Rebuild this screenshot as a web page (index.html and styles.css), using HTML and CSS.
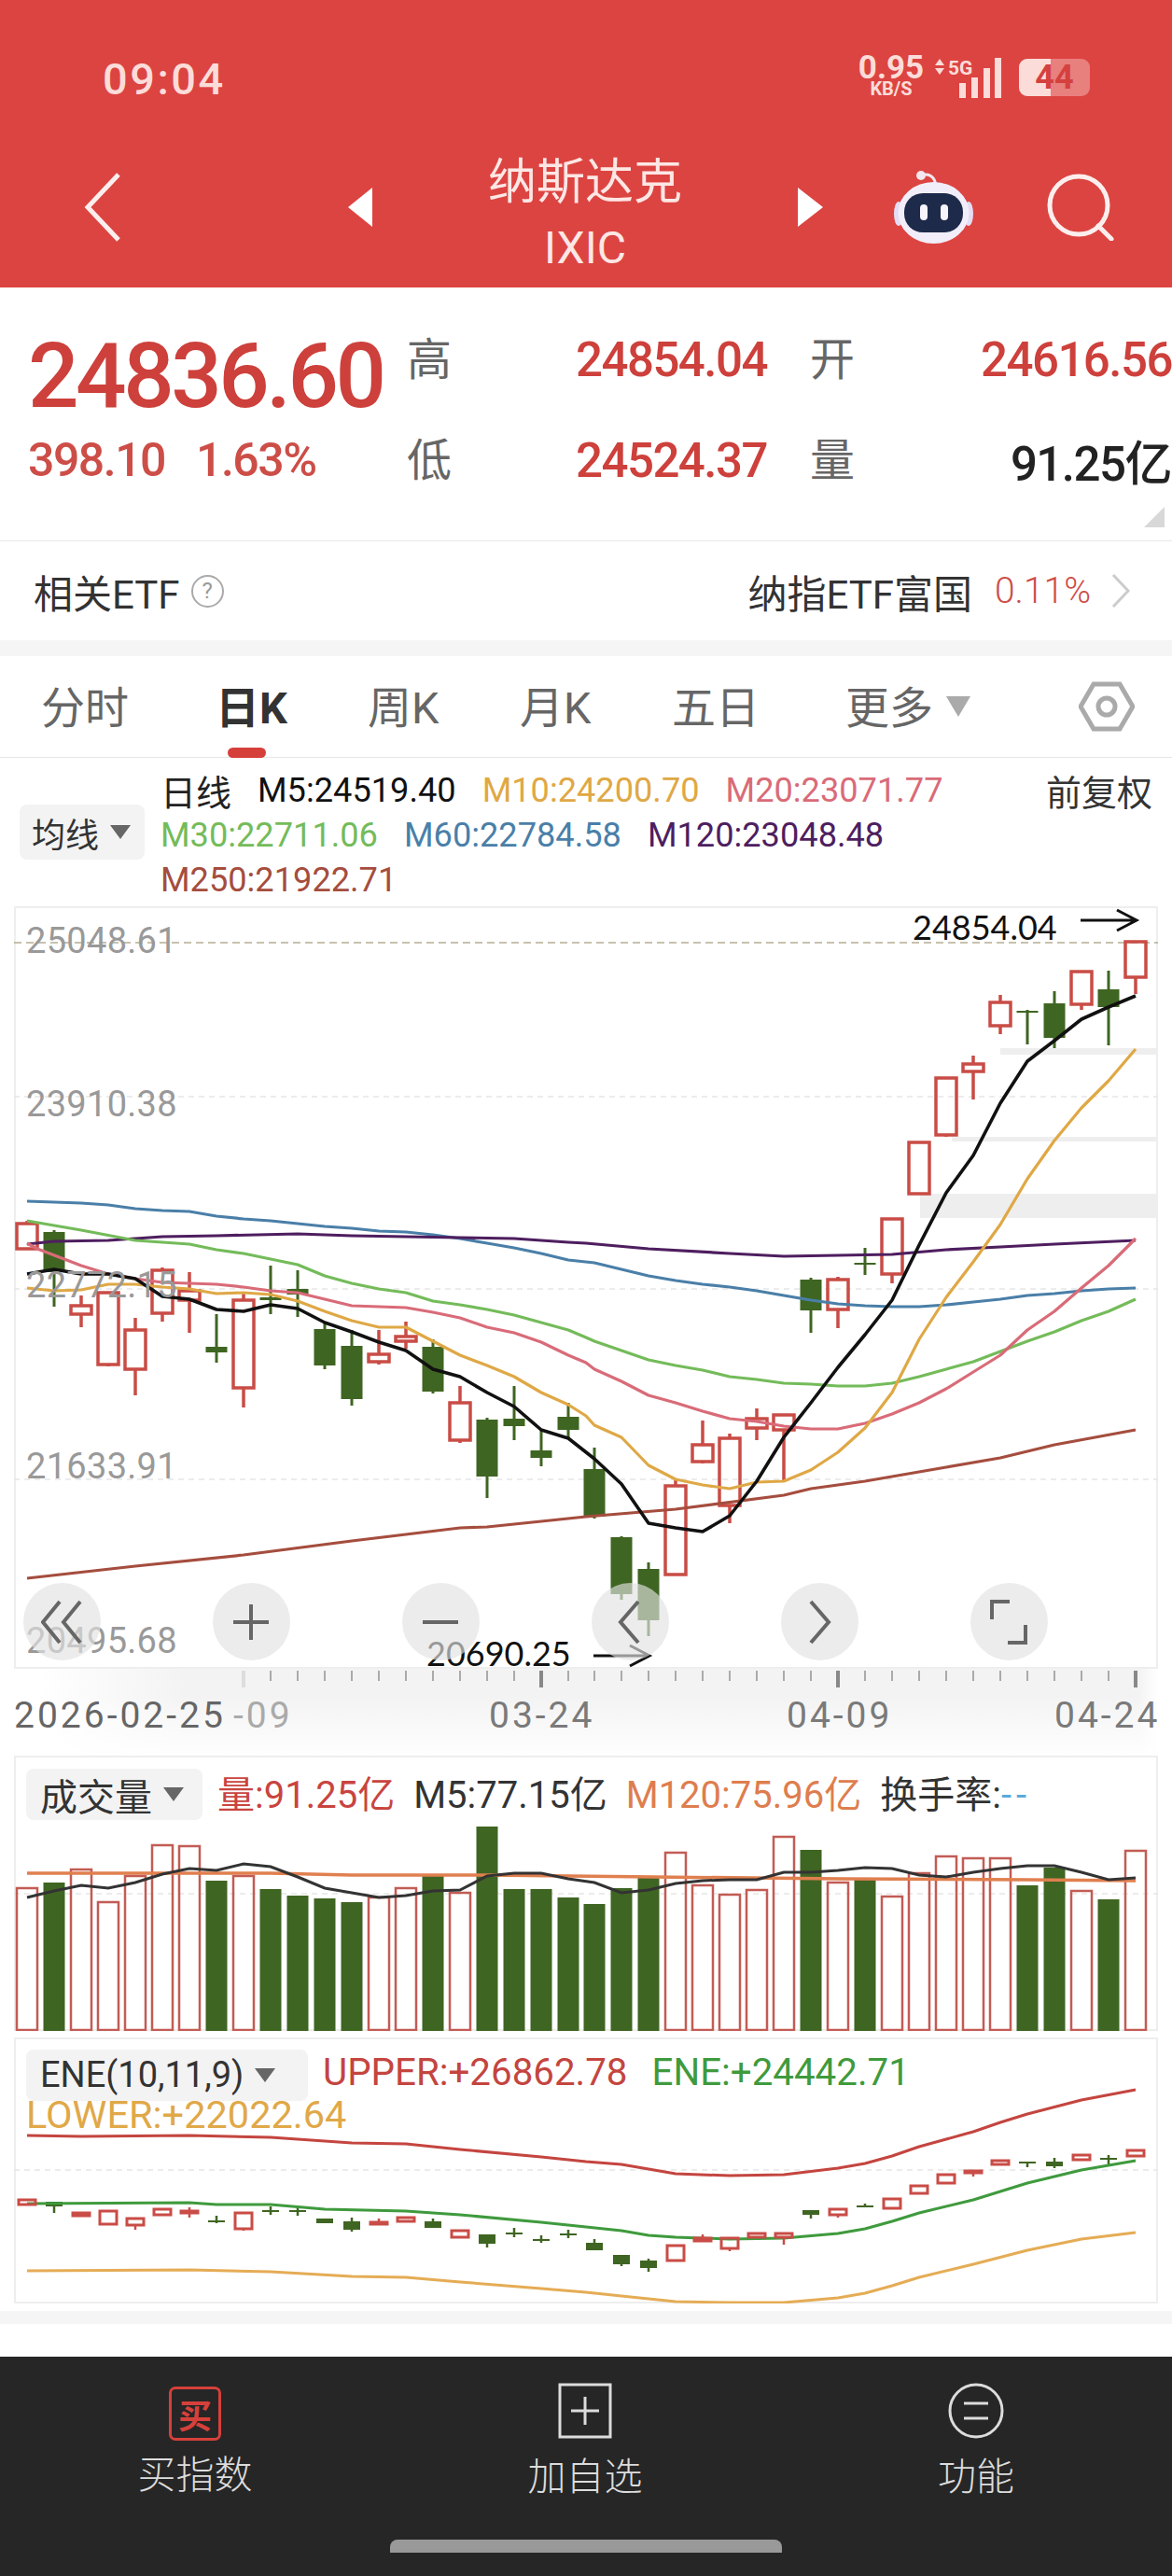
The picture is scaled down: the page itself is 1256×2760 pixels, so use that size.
FILE: index.html
```html
<!DOCTYPE html>
<html lang="zh">
<head>
<meta charset="utf-8">
<title>纳斯达克 IXIC</title>
<link rel="stylesheet" href="styles.css">
</head>
<body>
<div class="page">
<header class="hero">
  <div class="status">
    <span class="time">09:04</span>
    <div class="status-right">
      <div class="speed"><b>0.95</b><small>KB/S</small></div>
      <svg class="signal" viewBox="0 0 72 44" width="72" height="44"><path class="sig-fill" d="M1 9l5-7 5 7zM1 12l5 7 5-7z"/><text class="sig-text" x="15" y="19">5G</text><path class="sig-fill" d="M27 28h7v16h-7zM40 22h7v22h-7zM53 12h7v32h-7zM65 1h7v43h-7z"/></svg>
      <div class="battery"><span class="batt-fill"></span><span class="batt-text">44</span></div>
    </div>
  </div>
  <nav class="nav">
    <svg class="back" viewBox="0 0 40 74" width="40" height="74"><path d="M37 2L4 37l33 35" /></svg>
    <svg class="tri-l" viewBox="0 0 26 42" width="26" height="42"><path d="M26 0v42L0 21z"/></svg>
    <div class="title"><div class="t-cn">纳斯达克</div><div class="t-en">IXIC</div></div>
    <svg class="tri-r" viewBox="0 0 27 42" width="27" height="42"><path d="M0 0v42l27-21z"/></svg>
    <svg class="robot" viewBox="0 0 85 78" width="85" height="78"><path class="rb-ant" d="M30 5c8-3 14 2 15 11"/><circle class="rb-ball" cx="29" cy="5" r="5"/><ellipse class="rb-ear" cx="5" cy="46" rx="5" ry="13"/><ellipse class="rb-ear" cx="80" cy="46" rx="5" ry="13"/><ellipse class="rb-head" cx="42.500" cy="45" rx="38" ry="33"/><rect class="rb-face" x="11" y="24" width="63" height="42" rx="20"/><rect class="rb-eye" x="28" y="36" width="8" height="17" rx="4"/><rect class="rb-eye" x="50" y="36" width="8" height="17" rx="4"/></svg>
    <svg class="search" viewBox="0 0 72 72" width="72" height="72"><circle cx="34" cy="34" r="31"/><path d="M55 56l14 14"/></svg>
  </nav>
</header>

<section class="stats">
  <div class="quote">
    <div class="big">24836.60</div>
  </div>
  <div class="pair"><span class="k">高</span><span class="v red">24854.04</span></div>
  <div class="pair pair-last"><span class="k">开</span><span class="v red">24616.56</span></div>
  <div class="sub"><span>398.10</span><span>1.63%</span></div>
  <div class="pair"><span class="k">低</span><span class="v red">24524.37</span></div>
  <div class="pair pair-last"><span class="k">量</span><span class="v dark">91.25亿</span></div>
  <span class="corner"></span>
</section>

<section class="etf">
  <div class="etf-left">相关ETF<span class="help">?</span></div>
  <div class="etf-right"><span>纳指ETF富国</span><span class="etf-pct">0.11%</span>
    <svg class="etf-chev" viewBox="0 0 22 38" width="22" height="38"><path d="M3 2l16 17L3 36"/></svg></div>
</section>
<div class="band"></div>

<section class="tabs">
  <span class="tab">分时</span>
  <span class="tab active">日K</span>
  <span class="tab">周K</span>
  <span class="tab">月K</span>
  <span class="tab">五日</span>
  <span class="tab more">更多<svg viewBox="0 0 26 22" width="26" height="22"><path d="M0 0h26L13 22z"/></svg></span>
  <svg class="hex" viewBox="0 0 60 54" width="60" height="54"><path d="M16 3h28l14 24-14 24H16L2 27z"/><circle cx="30" cy="27" r="9"/></svg>
</section>

<section class="legend">
  <div class="drop drop-ma">均线<i class="caret"></i></div>
  <div class="legend-rows">
    <div class="lrow"><span class="c-day">日线</span><span class="c-k">M5:24519.40</span><span class="c-m10">M10:24200.70</span><span class="c-m20">M20:23071.77</span></div>
    <div class="lrow"><span class="c-m30">M30:22711.06</span><span class="c-m60">M60:22784.58</span><span class="c-m120">M120:23048.48</span></div>
    <div class="lrow"><span class="c-m250">M250:21922.71</span></div>
  </div>
  <span class="adj">前复权</span>
</section>

<section class="chart">
<svg class="plot" viewBox="15 971 1226 817" width="1226" height="817">
  <path class="zone" d="M1072 1123h169v7h-169zM1020 1218h221v5h-221zM986 1279h255v26h-255z"/>
  <path class="grid" d="M15 1175H1241M15 1381H1241M15 1585H1241"/>
  <path class="grid-top" d="M15 1010H1241"/>
  <text class="axis" x="28" y="1021">25048.61</text>
  <text class="axis" x="28" y="1196">23910.38</text>
  <path class="up-wick" d="M29 1308V1311M87 1388V1399M87 1408V1422M116 1462V1464M145 1412V1425M145 1467V1495M174 1358V1361M174 1407V1416M203 1363V1383M203 1393V1428M261 1385V1393M261 1487V1508M406 1425V1451M406 1459V1462M435 1416V1432M435 1437V1445M493 1485V1503M493 1543V1546M724 1585V1592M753 1522V1548M753 1566V1568M782 1536V1541M782 1613V1632M811 1509V1520M811 1530V1543M840 1532V1587M898 1368V1371M898 1403V1423M956 1365V1375M1014 1216V1218M1043 1131V1140M1043 1148V1178M1072 1066V1074M1072 1099V1108M1159 1076V1082M1217 1047V1065"/>
  <path class="up-body" d="M18 1311h22v27h-22zM76 1399h22v9h-22zM105 1385h22v77h-22zM134 1425h22v42h-22zM163 1361h22v46h-22zM192 1383h22v10h-22zM250 1393h22v94h-22zM395 1451h22v8h-22zM424 1432h22v5h-22zM482 1503h22v40h-22zM713 1592h22v95h-22zM742 1548h22v18h-22zM771 1541h22v72h-22zM800 1520h22v10h-22zM829 1516h22v16h-22zM887 1371h22v32h-22zM945 1306h22v59h-22zM974 1224h22v55h-22zM1003 1155h22v61h-22zM1032 1140h22v8h-22zM1061 1074h22v25h-22zM1148 1041h22v35h-22zM1206 1009h22v38h-22z"/>
  <path class="dn-wick" d="M58 1318V1400M232 1408V1460M290 1356V1408M319 1361V1411M348 1418V1467M377 1425V1506M464 1435V1493M522 1519V1605M551 1485V1543M580 1533V1571M609 1503V1540M637 1551V1627M666 1646V1714M695 1674V1753M869 1369V1428M927 1337V1366M1101 1082V1119M1130 1062V1123M1188 1040V1120"/>
  <path class="dn-body" d="M46.500 1320h23v43h-23zM220.500 1443h23v6h-23zM278.500 1390h23v3h-23zM307.500 1381h23v6h-23zM336.500 1424h23v39h-23zM365.500 1442h23v57h-23zM452.500 1443h23v48h-23zM510.500 1521h23v61h-23zM539.500 1520h23v8h-23zM568.500 1554h23v8h-23zM597.500 1518h23v14h-23zM625.500 1574h23v51h-23zM654.500 1647h23v61h-23zM683.500 1681h23v55h-23zM857.500 1371h23v33h-23zM915.500 1353h23v2h-23zM1089.500 1083h23v2h-23zM1118.500 1075h23v37h-23zM1176.500 1060h23v19h-23z"/>
  <polyline class="ma c250" points="29,1691 145,1678 261,1666 377,1651 493,1637 522,1636 580,1630 628,1625 724,1617 840,1602 869,1595 927,1587 1014,1572 1072,1562 1130,1548 1217,1532"/>
  <polyline class="ma c60" points="29,1287 58,1288 87,1289 116,1291 145,1295 174,1297 203,1298 232,1303 261,1306 290,1308 319,1311 348,1314 377,1316 406,1319 435,1320 464,1323 493,1327 522,1332 551,1337 580,1343 609,1350 637,1353 666,1360 695,1367 724,1372 753,1376 782,1379 811,1383 840,1388 869,1393 898,1397 927,1399 956,1400 985,1400 1014,1398 1043,1395 1072,1392 1101,1388 1130,1386 1159,1383 1188,1381 1217,1380"/>
  <polyline class="ma c120" points="29,1333 58,1330 116,1329 174,1325 232,1324 319,1322 377,1324 435,1325 493,1326 551,1327 609,1331 628,1332 695,1338 782,1343 840,1346 898,1345 956,1344 1014,1339 1072,1336 1130,1333 1217,1329"/>
  <polyline class="ma c30" points="29,1308 87,1318 145,1329 203,1333 232,1339 261,1343 319,1355 348,1367 377,1375 406,1381 435,1385 464,1394 493,1398 522,1403 551,1409 580,1417 609,1425 628,1433 637,1437 666,1447 695,1457 724,1463 753,1468 782,1475 811,1478 840,1482 869,1483 898,1485 927,1485 956,1482 985,1475 1014,1467 1043,1459 1072,1448 1101,1437 1130,1427 1159,1415 1188,1405 1217,1392"/>
  <polyline class="ma c20" points="29,1332 40,1338 87,1356 116,1365 145,1370 174,1374 203,1375 232,1376 261,1379 290,1383 319,1385 348,1392 377,1399 406,1400 435,1401 464,1406 493,1412 522,1422 551,1428 580,1438 609,1452 628,1460 637,1467 666,1480 695,1495 724,1503 753,1512 782,1520 811,1523 840,1528 869,1531 898,1531 927,1525 956,1515 985,1503 1014,1488 1043,1470 1072,1452 1101,1425 1130,1405 1159,1380 1188,1356 1217,1327"/>
  <polyline class="ma c10" points="29,1380 58,1383 87,1382 116,1376 145,1376 174,1379 203,1381 232,1386 261,1385 290,1387 319,1394 348,1405 377,1415 406,1422 435,1422 464,1437 493,1452 522,1463 551,1475 580,1492 609,1505 628,1517 637,1527 666,1540 695,1570 724,1585 753,1591 782,1595 811,1588 840,1587 869,1575 898,1556 927,1530 956,1492 985,1435 1014,1390 1043,1352 1072,1312 1101,1263 1130,1222 1159,1187 1188,1158 1217,1124"/>
  <polyline class="ma c5" points="29,1365 58,1360 87,1365 116,1365 145,1370 174,1389 203,1392 232,1403 261,1405 290,1398 319,1402 348,1417 377,1427 406,1438 435,1447 464,1467 493,1475 522,1492 551,1507 580,1532 609,1541 637,1563 666,1590 695,1632 724,1637 753,1641 782,1624 811,1587 840,1540 869,1503 898,1465 927,1430 956,1393 985,1334 1014,1278 1043,1238 1072,1182 1101,1137 1130,1115 1159,1092 1188,1079 1217,1067"/>
  <text class="axis" x="28" y="1390">22772.15</text>
  <text class="axis" x="28" y="1584">21633.91</text>
  <text class="axis" x="28" y="1771">20495.68</text>
  <text class="mark" x="978" y="1007">24854.04</text>
  <path class="arrow" d="M1158 986h60M1197 975l21 11-21 11"/>
  <text class="mark" x="457" y="1785">20690.25</text>
  <path class="arrow" d="M636 1774h60M675 1763l21 11-21 11"/>
</svg>
<div class="tools">
  <span class="tool"><svg viewBox="0 0 44 50" width="44" height="50"><path d="M20 3L2 25l18 22M42 3L24 25l18 22"/></svg></span>
  <span class="tool"><svg viewBox="0 0 44 50" width="44" height="50"><path d="M3 25h38M22 6v38"/></svg></span>
  <span class="tool"><svg viewBox="0 0 44 50" width="44" height="50"><path d="M3 25h38"/></svg></span>
  <span class="tool"><svg viewBox="0 0 44 50" width="44" height="50"><path d="M31 3L12 25l19 22"/></svg></span>
  <span class="tool"><svg viewBox="0 0 44 50" width="44" height="50"><path d="M13 3l19 22-19 22"/></svg></span>
  <span class="tool"><svg viewBox="0 0 44 50" width="44" height="50"><path d="M23 3H4v19M21 47h19V28"/></svg></span>
</div>
</section>

<section class="xaxis">
<svg class="ticks" viewBox="0 1788 1256 93" width="1256" height="93">
  <path class="tick-minor" d="M290 1790v11M319 1790v11M348 1790v11M377 1790v11M406 1790v11M435 1790v11M464 1790v11M493 1790v11M522 1790v11M551 1790v11M609 1790v11M637 1790v11M666 1790v11M695 1790v11M724 1790v11M753 1790v11M782 1790v11M811 1790v11M840 1790v11M869 1790v11M927 1790v11M956 1790v11M985 1790v11M1014 1790v11M1043 1790v11M1072 1790v11M1101 1790v11M1130 1790v11M1159 1790v11M1188 1790v11"/>
  <path class="tick-major" d="M580 1790v18M898 1790v18M1217 1790v18"/>
  <path class="tick-fade" d="M261 1790v18"/>
  <text class="date d1" x="15" y="1851">2026-02-25</text>
  <text class="date d2" x="250" y="1851">-09</text>
  <text class="date d3" x="524" y="1851">03-24</text>
  <text class="date d3" x="843" y="1851">04-09</text>
  <text class="date d3" x="1130" y="1851">04-24</text>
</svg>
</section>

<section class="panel vol">
  <div class="panel-head">
    <div class="drop drop-vol">成交量<i class="caret"></i></div>
    <span class="c-vol">量:91.25亿</span><span class="c-k2">M5:77.15亿</span><span class="c-v120">M120:75.96亿</span><span class="c-k2">换手率:<em class="c-dash">--</em></span>
  </div>
  <svg class="vol-plot" viewBox="15 1950 1226 224" width="1226" height="224">
    <path class="grid" d="M15 2027H1241"/>
    <path class="vol-dn" d="M46.500 2015h23V2174h-23zM220.500 2013h23V2174h-23zM278.500 2022h23V2174h-23zM307.500 2029h23V2174h-23zM336.500 2032h23V2174h-23zM365.500 2036h23V2174h-23zM452.500 2006h23V2174h-23zM510.500 1955h23V2174h-23zM539.500 2022h23V2174h-23zM568.500 2022h23V2174h-23zM597.500 2031h23V2174h-23zM625.500 2038h23V2174h-23zM654.500 2021h23V2174h-23zM683.500 2009h23V2174h-23zM857.500 1980h23V2174h-23zM915.500 2011h23V2174h-23zM1089.500 2018h23V2174h-23zM1118.500 1999h23V2174h-23zM1176.500 2033h23V2174h-23z"/>
    <path class="vol-up" d="M18 2021h22V2173h-22zM76 2001h22V2173h-22zM105 2036h22V2173h-22zM134 2008h22V2173h-22zM163 1975h22V2173h-22zM192 1976h22V2173h-22zM250 2008h22V2173h-22zM395 2031h22V2173h-22zM424 2021h22V2173h-22zM482 2026h22V2173h-22zM713 1983h22V2173h-22zM742 2018h22V2173h-22zM771 2028h22V2173h-22zM800 2023h22V2173h-22zM829 1966h22V2173h-22zM887 2015h22V2173h-22zM945 2030h22V2173h-22zM974 2005h22V2173h-22zM1003 1987h22V2173h-22zM1032 1989h22V2173h-22zM1061 1989h22V2173h-22zM1148 2024h22V2173h-22zM1206 1981h22V2173h-22z"/>
    <polyline class="vl cv120" points="29,2005 290,2005 377,2007 522,2007 700,2009 900,2011 1100,2012 1217,2013"/>
    <polyline class="vl cv5" points="29,2031 58,2024 87,2018 116,2021 145,2015 174,2006 203,2000 232,2002 261,1995 290,1998 319,2009 348,2021 377,2026 406,2031 435,2029 464,2024 493,2023 522,2008 551,2005 580,2005 609,2011 637,2015 666,2026 695,2023 724,2016 753,2013 782,2012 811,2012 840,2004 869,2004 898,2002 927,1999 956,2000 985,2007 1014,2009 1043,2004 1072,2000 1101,1997 1130,1997 1159,2004 1188,2012 1217,2010"/>
  </svg>
</section>

<section class="panel ene">
  <svg class="ene-plot" viewBox="15 2183 1226 285" width="1226" height="285">
    <path class="grid" d="M15 2325H1241"/>
    <polyline class="el e-up" points="29,2288 87,2289 203,2288 290,2290 377,2296 435,2297 493,2303 580,2311 628,2316 666,2319 724,2329 782,2331 840,2330 898,2323 927,2318 956,2310 985,2300 1014,2292 1043,2284 1072,2274 1101,2265 1159,2250 1217,2239"/>
    <polyline class="el e-lo" points="29,2433 203,2432 290,2434 377,2439 435,2440 493,2445 580,2452 628,2456 666,2460 724,2466 782,2467 840,2467 898,2462 927,2457 956,2449 985,2440 1043,2426 1101,2411 1159,2399 1217,2392"/>
    <path class="e-wick-dn" d="M58 2359V2371M232 2374V2382M290 2364V2373M319 2365V2374M377 2376V2391M464 2377V2387M522 2394V2408M551 2387V2397M580 2395V2403M609 2389V2398M637 2399V2411M666 2416V2428M695 2420V2434M869 2368V2377M927 2361V2365M1101 2316V2322M1130 2312V2323M1188 2309V2320"/>
    <path class="e-body-dn" d="M49 2359h18v5h-18zM223 2379h18v2h-18zM281 2368h18v2h-18zM310 2368h18v2h-18zM339 2377h18v5h-18zM368 2380h18v9h-18zM455 2380h18v7h-18zM513 2394h18v10h-18zM542 2392h18v2h-18zM571 2399h18v2h-18zM600 2393h18v2h-18zM628 2403h18v8h-18zM657 2416h18v10h-18zM686 2422h18v8h-18zM860 2368h18v5h-18zM918 2363h18v2h-18zM1092 2316h18v2h-18zM1121 2316h18v5h-18zM1179 2312h18v2h-18z"/>
    <polyline class="el e-mid" points="29,2361 203,2360 232,2362 290,2362 348,2367 435,2369 493,2373 580,2381 628,2386 666,2390 695,2395 724,2397 782,2399 840,2398 898,2393 927,2388 956,2380 985,2371 1043,2357 1101,2339 1159,2325 1217,2315"/>
    <path class="e-wick-up" d="M145 2384V2389M203 2365V2376M261 2388V2390M406 2377V2380M753 2394V2397M782 2410V2412M840 2398V2405M898 2373V2376M1043 2328V2332"/>
    <path class="e-body-up" d="M20 2357h18v5h-18zM78 2371h18v3h-18zM107 2369h18v14h-18zM136 2377h18v7h-18zM165 2367h18v6h-18zM194 2369h18v2h-18zM252 2371h18v17h-18zM397 2381h18v2h-18zM426 2376h18v4h-18zM484 2390h18v7h-18zM715 2406h18v16h-18zM744 2398h18v3h-18zM773 2398h18v11h-18zM802 2393h18v4h-18zM831 2393h18v4h-18zM889 2367h18v6h-18zM947 2356h18v10h-18zM976 2342h18v8h-18zM1005 2330h18v9h-18zM1034 2326h18v2h-18zM1063 2315h18v4h-18zM1150 2309h18v5h-18zM1208 2304h18v6h-18z"/>
  </svg>
  <div class="ene-head">
    <div class="ene-row">
      <div class="drop drop-ene">ENE(10,11,9)<i class="caret"></i></div>
      <span class="c-upper">UPPER:+26862.78</span><span class="c-ene">ENE:+24442.71</span>
    </div>
    <div class="c-lower">LOWER:+22022.64</div>
  </div>
</section>

<div class="spacer-a"></div>
<div class="band band-low"></div>
<div class="spacer-b"></div>

<footer class="foot">
  <div class="foot-row">
    <div class="fitem">
      <span class="buy-icon">买</span>
      <span class="flabel">买指数</span>
    </div>
    <div class="fitem">
      <svg class="ficon" viewBox="0 0 58 60" width="58" height="60"><path d="M2 2h54v56H2zM14 30h30M29 15v30"/></svg>
      <span class="flabel">加自选</span>
    </div>
    <div class="fitem">
      <svg class="ficon" viewBox="0 0 60 60" width="60" height="60"><circle cx="30" cy="30" r="28"/><path d="M17 22h26M17 38h26"/></svg>
      <span class="flabel">功能</span>
    </div>
  </div>
  <div class="home"></div>
</footer>
</div>
</body>
</html>
```
FILE: styles.css
```css
* { box-sizing: border-box; }
html, body { margin: 0; padding: 0; background: #fff; }
body { font-family: Roboto, "Noto Sans CJK SC", sans-serif; color: #222; }
.page { width: 1256px; height: 2760px; overflow: hidden; }
svg { display: block; }

/* header */
.hero { height: 308px; background: #dc4441; color: #fff; }
.status { height: 156px; display: flex; align-items: flex-start; padding: 60px 90px 0 110px; justify-content: space-between; }
.time { font-size: 47px; line-height: 50px; font-weight: 500; color: #fbdcd9; letter-spacing: 2.500px; }
.status-right { display: flex; align-items: flex-start; margin-top: 0; }
.speed { width: 72px; display: flex; flex-direction: column; align-items: center; color: #fbdcd9; margin-top: -1px; }
.speed b { font-size: 35px; line-height: 28px; font-weight: 700; }
.speed small { font-size: 20px; line-height: 16px; font-weight: 700; }
.signal { margin: 1px 0 0 10px; }
.sig-fill { fill: #fbdcd9; }
.sig-text { font-size: 21px; font-weight: 700; fill: #fbdcd9; }
.battery { width: 76px; height: 40px; margin: 3px -2px 0 19px; border-radius: 9px; background: rgba(251, 220, 217, .4); position: relative; overflow: hidden; display: flex; justify-content: center; align-items: center; }
.batt-fill { position: absolute; left: 0; top: 0; bottom: 0; width: 34px; background: #fbdcd9; }
.batt-text { position: relative; color: #d4413e; font-size: 36px; font-weight: 700; line-height: 40px; }
.nav { height: 152px; display: flex; align-items: center; padding: 0 0 20px 90px; }
.back path { fill: none; stroke: #fdeeee; stroke-width: 5; }
.tri-l, .tri-r { fill: #fff; }
.tri-l { margin-left: 243px; }
.title { width: 456px; align-self: flex-start; text-align: center; color: #fde7e5; }
.t-cn { font-size: 52px; line-height: 70px; font-family: "Noto Sans CJK SC", sans-serif; }
.t-en { font-size: 48px; line-height: 80px; }
.robot { margin-left: 76px; }
.rb-ant { fill: none; stroke: #f3e6ee; stroke-width: 3; }
.rb-ball { fill: #f3e6ee; }
.rb-ear { fill: #e3dcf4; }
.rb-head { fill: #f1eefa; }
.rb-face { fill: #1e2a4a; }
.rb-eye { fill: #f6f3fb; }
.search { margin-left: 79px; fill: none; stroke: #fdeeee; stroke-width: 5; stroke-linecap: round; }

/* stats */
.stats { height: 272px; padding-top: 23px; display: grid; grid-template-columns: 436px 386px 434px; grid-template-rows: 108px 108px; border-bottom: 1px solid #e8e8e8; position: relative; overflow: hidden; }
.quote { padding-left: 30px; align-self: end; }
.big { font-size: 96px; line-height: 72px; font-weight: 500; letter-spacing: -3.5px; color: #cd403b; }
.sub { padding-left: 30px; display: flex; gap: 33px; font-size: 50px; line-height: 54px; letter-spacing: -1.5px; color: #cd4d47; align-self: center; font-weight: 500; }
.pair { display: flex; justify-content: space-between; align-items: center; }
.pair-last { padding-left: 46px; }
.k { font-size: 48px; line-height: 60px; margin-top: -8px; font-family: "Noto Sans CJK SC", sans-serif; color: #666; }
.v { font-size: 51px; font-weight: 500; letter-spacing: -1.5px; }
.red { color: #cd403b; }
.dark { color: #222; font-family: Roboto, "Noto Sans CJK SC", sans-serif; padding-right: 1px; letter-spacing: -1.500px; }
.corner { position: absolute; right: 8px; bottom: 14px; width: 0; height: 0; border-left: 22px solid transparent; border-bottom: 22px solid #d8d8d8; }

/* etf */
.etf { height: 106px; display: flex; align-items: center; justify-content: space-between; padding: 0 44px 0 36px; font-size: 42px; color: #333; }
.etf-left, .etf-right { display: flex; align-items: center; }
.help { width: 35px; height: 35px; margin-left: 12px; border: 2px solid #aaa; border-radius: 50%; font-size: 24px; color: #999; display: flex; align-items: center; justify-content: center; }
.etf-pct { color: #cd4d47; margin-left: 24px; font-size: 39px; font-weight: 300; }
.etf-chev { margin-left: 21px; fill: none; stroke: #ccc; stroke-width: 3; }
.band { height: 17px; background: #f5f5f5; }

/* tabs */
.tabs { height: 109px; border-bottom: 1px solid #e6e6e6; padding-left: 44px; display: grid; grid-template-columns: 187px 163px 163px 163px 186px 250px 60px; align-items: center; font-size: 47px; color: #666; position: relative; }
.tab { position: relative; line-height: 60px; margin-top: 4px; white-space: nowrap; }
.tab.active { color: #333; font-weight: 700; }
.tab.active::after { content: ""; position: absolute; left: 13px; top: 72px; width: 41px; height: 11px; border-radius: 6px; background: #d6403b; }
.more { display: flex; align-items: center; gap: 14px; fill: #aaa; }
.more svg { margin-top: -4px; }
.hex { fill: none; stroke: #aaa; stroke-width: 5; margin-top: 0; }

/* legend */
.legend { height: 159px; display: flex; align-items: flex-start; padding: 11px 21px 0 21px; font-size: 36.200px; line-height: 48px; }
.drop { background: #f3f3f3; border-radius: 8px; display: flex; align-items: center; color: #333; font-family: "Noto Sans CJK SC", sans-serif; white-space: nowrap; }
.caret { display: block; width: 0; height: 0; border-left: 11px solid transparent; border-right: 11px solid transparent; border-top: 15px solid #666; margin-left: 12px; }
.drop-ma { width: 134px; height: 59px; margin: 39px 17px 0 0; padding-left: 13px; font-size: 36px; }
.legend-rows { display: flex; flex-direction: column; }
.lrow { display: flex; gap: 28px; white-space: nowrap; height: 48px; }
.adj { margin-left: auto; font-size: 38px; color: #333; font-family: "Noto Sans CJK SC", sans-serif; }
.c-day { color: #222; font-family: "Noto Sans CJK SC", sans-serif; font-size: 38px; margin-left: 0; }
.c-k { color: #111; }
.c-m10 { color: #dfa845; }
.c-m20 { color: #d96b78; }
.c-m30 { color: #74bb5a; }
.c-m60 { color: #4a7fa8; }
.c-m120 { color: #4e1e5f; }
.c-m250 { color: #a54d3e; }

/* chart */
.chart { height: 817px; margin: 0 15px; box-shadow: inset 0 0 0 2px #eee; position: relative; }
.plot { overflow: visible; }
.zone { fill: #eee; }
.grid { fill: none; stroke: #e6e6e6; stroke-width: 1.500; stroke-dasharray: 6 5; }
.grid-top { fill: none; stroke: #b5ad92; stroke-width: 1.500; stroke-dasharray: 8 5; }
.axis { font-size: 38px; fill: #999; letter-spacing: .3px; }
.mark { font-size: 36px; fill: #111; font-family: Lato, Roboto, sans-serif; }
.arrow { fill: none; stroke: #111; stroke-width: 3; }
.up-wick { fill: none; stroke: #c94c46; stroke-width: 3.500; }
.up-body { fill: none; stroke: #c94c46; stroke-width: 3.500; }
.dn-wick { fill: none; stroke: #3f6522; stroke-width: 3; }
.dn-body { fill: #3f6522; }
.ma { fill: none; stroke-width: 3.200; stroke-linejoin: round; }
.c5 { stroke: #111; stroke-width: 3.600; }
.c10 { stroke: #dfa845; }
.c20 { stroke: #d96b78; }
.c30 { stroke: #74bb5a; }
.c60 { stroke: #4a7fa8; }
.c120 { stroke: #4e1e5f; }
.c250 { stroke: #a54d3e; }
.tools { position: absolute; left: 9.500px; top: 725px; display: flex; gap: 120px; }
.tool { width: 83px; height: 83px; border-radius: 50%; background: rgba(226, 226, 226, .65); display: flex; align-items: center; justify-content: center; }
.tool svg { fill: none; stroke: #666; stroke-width: 4; }

/* date axis */
.xaxis { height: 93px; background: linear-gradient(to bottom, rgba(255,255,255,0) 30%, rgba(255,255,255,.95)), linear-gradient(to right, #fff 40px, #f3f3f3 200px, #f3f3f3 1220px, #fff 1241px); background-color: #fff; }
.tick-minor { stroke: #aaa; stroke-width: 2; fill: none; }
.tick-major { stroke: #888; stroke-width: 4; fill: none; }
.tick-fade { stroke: #ddd; stroke-width: 4; fill: none; }
.date { font-size: 39px; fill: #666; letter-spacing: 3px; }
.d2 { fill: #aaa; }
.d3 { fill: #7a7a7a; }

/* sub panels */
.panel { margin: 0 15px; box-shadow: inset 0 0 0 2px #eee; position: relative; }
.vol { height: 295px; margin-bottom: 7px; }
.panel-head { height: 71px; padding: 14px 0 0 13px; display: flex; align-items: flex-start; font-size: 40px; line-height: 58px; white-space: nowrap; gap: 20px; }
.drop-vol { width: 189px; height: 55px; padding-left: 15px; font-size: 40px; margin-right: -4px; gap: 0; flex: none; }
.c-vol { color: #c9443f; }
.c-k2 { color: #333; }
.c-v120 { color: #de7d4e; }
.c-dash { color: #5aa9dc; font-style: normal; letter-spacing: 5px; }
.vol-plot { margin-top: 0; }
.ene { height: 285px; }
.ene-head { position: absolute; left: 13px; top: 13px; font-size: 40.300px; line-height: 55px; white-space: nowrap; }
.ene-row { display: flex; align-items: flex-start; gap: 26px; }
.ene-row span { margin-top: -3px; }
.drop-ene { width: 302px; height: 55px; padding-left: 15px; font-family: Roboto, sans-serif; font-size: 38px; margin-right: -10px; }
.c-upper { color: #c4453f; font-family: Roboto, sans-serif; }
.c-ene { color: #3f9a3d; }
.c-lower { color: #e0a848; margin: -13px 0 0 0; font-size: 41.500px; }
.el { fill: none; stroke-width: 3; stroke-linejoin: round; }
.e-up { stroke: #c4453f; }
.e-mid { stroke: #3f9a3d; }
.e-lo { stroke: #e5ac55; }
.e-wick-dn { stroke: #3f6522; stroke-width: 2.500; fill: none; }
.e-body-dn { fill: #3f6522; }
.e-wick-up { stroke: #c94c46; stroke-width: 2.500; fill: none; }
.e-body-up { fill: none; stroke: #c94c46; stroke-width: 3; }
.vol-dn { fill: #3f6522; }
.vol-up { fill: none; stroke: #c25c55; stroke-width: 2.500; }
.vl { fill: none; stroke-width: 3; }
.cv5 { stroke: #333; }
.cv120 { stroke: #e07f4f; stroke-width: 3.500; }

.spacer-a { height: 8px; }
.band { background: #f5f5f5; }
.band-low { height: 14px; }
.spacer-b { height: 35px; }

/* footer */
.foot { height: 235px; background: #262626; display: flex; flex-direction: column; align-items: center; }
.foot-row { width: 1256px; display: grid; grid-template-columns: 418px 418px 420px; padding-top: 28px; height: 196px; }
.fitem { display: flex; flex-direction: column; align-items: center; }
.buy-icon { width: 56px; height: 58px; margin-top: 4px; border: 3px solid #d6403b; border-radius: 7px; color: #d6403b; font-size: 36px; font-weight: 700; display: flex; align-items: center; justify-content: center; font-family: "Noto Sans CJK SC", sans-serif; line-height: 1; }
.ficon { fill: none; stroke: #dcdcdc; stroke-width: 3; }
.flabel { font-size: 41px; line-height: 52px; color: #dcdcdc; margin-top: 7px; font-family: "Noto Sans CJK SC", sans-serif; font-weight: 300; }
.fitem:nth-child(n+2) .flabel { margin-top: 11px; }
.home { width: 420px; height: 14px; background: #999; border-radius: 8px 8px 0 0; }
```
